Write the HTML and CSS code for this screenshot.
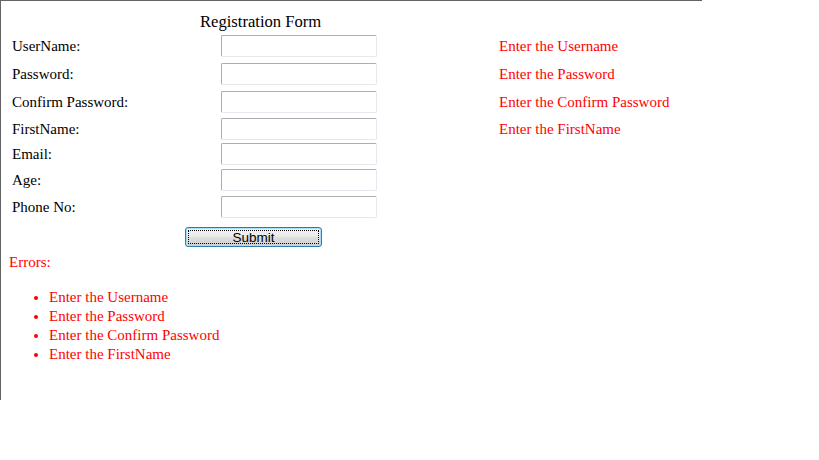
FILE: index.html
```html
<!DOCTYPE html>
<html>
<head>
<meta charset="utf-8">
<link rel="stylesheet" href="styles.css">
</head>
<body>
<div class="frame">
  <div class="title">Registration Form</div>
  <div class="form">
    <div class="label">UserName:</div><div class="field"><input type="text"></div><div class="err">Enter the Username</div>
    <div class="label">Password:</div><div class="field"><input type="password"></div><div class="err">Enter the Password</div>
    <div class="label">Confirm Password:</div><div class="field"><input type="password"></div><div class="err">Enter the Confirm Password</div>
    <div class="label">FirstName:</div><div class="field"><input type="text"></div><div class="err">Enter the FirstName</div>
    <div class="label">Email:</div><div class="field"><input type="text"></div><div class="err"></div>
    <div class="label">Age:</div><div class="field"><input type="text"></div><div class="err"></div>
    <div class="label">Phone No:</div><div class="field"><input type="text"></div><div class="err"></div>
  </div>
  <div class="actions"><button class="submit" type="button">Submit</button></div>
  <div class="summary">
    <div class="summary-title">Errors:</div>
    <ul class="summary-list">
      <li>Enter the Username</li>
      <li>Enter the Password</li>
      <li>Enter the Confirm Password</li>
      <li>Enter the FirstName</li>
    </ul>
  </div>
</div>
</body>
</html>
```
FILE: styles.css
```css
html, body {
  margin: 0;
  padding: 0;
  background: #ffffff;
}
body {
  font-family: "Liberation Serif", "Times New Roman", serif;
  font-size: 15px;
  color: #000000;
}
.frame {
  width: 701px;
  height: 399px;
  border-top: 1px solid #646464;
  border-left: 1px solid #646464;
  box-sizing: content-box;
  overflow: hidden;
}
.title {
  padding-top: 11px;
  padding-left: 199px;
  line-height: 20px;
  height: 20px;
  font-size: 16.6px;
}
.form {
  display: grid;
  grid-template-columns: 209px 156px 122px auto;
  grid-template-rows: 28px 28px 28px 25px 26px 26px 28px;
  padding-left: 11px;
}
.form > .err {
  grid-column: 4;
}
.label, .field, .err {
  display: flex;
  align-items: center;
  line-height: 18px;
}
.err {
  color: #ff0000;
}
.field input {
  box-sizing: border-box;
  width: 156px;
  height: 22px;
  margin: 0;
  padding: 1px 3px;
  border-style: solid;
  border-width: 1px;
  border-color: #abadb3 #e3e9ef #e3e9ef #abadb3;
  border-radius: 2px;
  background: #ffffff;
  font-family: "Liberation Sans", Arial, sans-serif;
  font-size: 13px;
  outline: none;
}
.actions {
  padding-top: 6px;
  padding-left: 184px;
  height: 20px;
}
.submit {
  box-sizing: border-box;
  width: 137px;
  height: 20px;
  margin: 0;
  padding: 0;
  border: 1px solid #2f7ab8;
  border-radius: 3px;
  box-shadow: inset 0 0 0 1px #a9dcf6;
  background: linear-gradient(#f2f2f2 0%, #ebebeb 45%, #dddddd 55%, #cfcfcf 100%);
  font-family: "Liberation Sans", Arial, sans-serif;
  font-size: 13.5px;
  line-height: 17px;
  color: #000000;
  outline: 1px dotted #000000;
  outline-offset: -4px;
}
.summary {
  padding-left: 8px;
  padding-top: 6px;
  color: #ff0000;
}
.summary-title {
  line-height: 18px;
}
.summary-list {
  margin: 17px 0 0 0;
  padding-left: 40px;
  list-style: disc;
}
.summary-list li {
  line-height: 19px;
}
```
